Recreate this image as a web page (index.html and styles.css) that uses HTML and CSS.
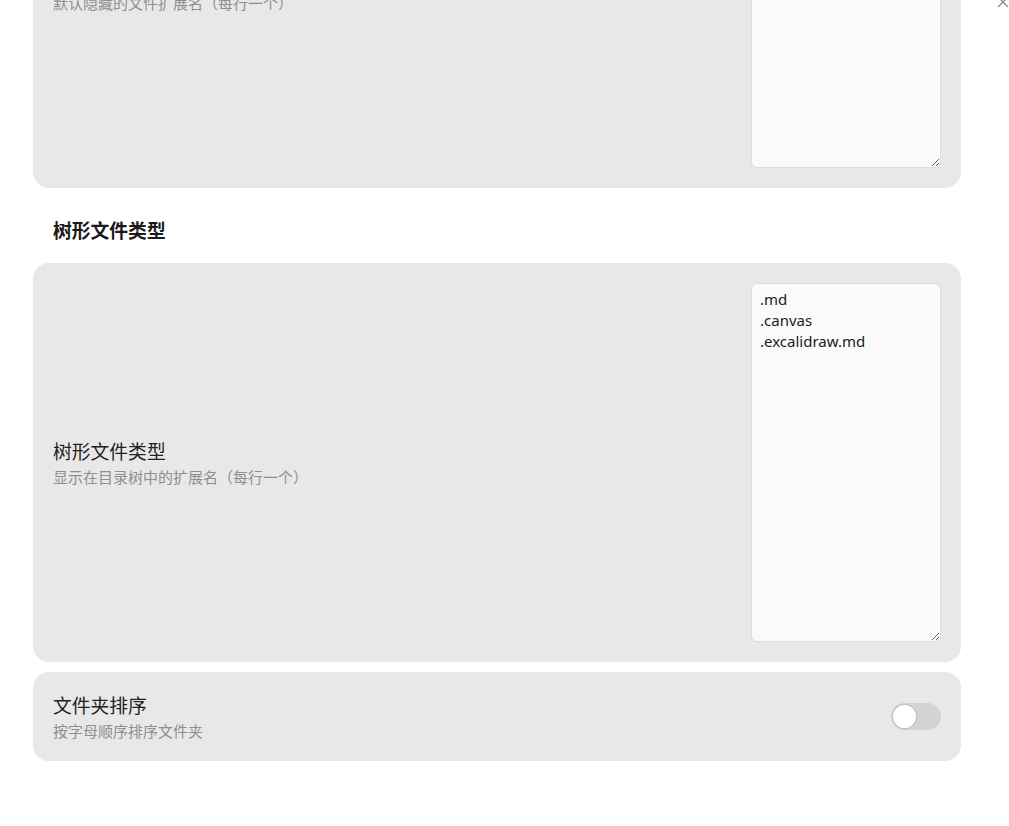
FILE: index.html
```html
<!DOCTYPE html>
<html lang="zh-CN">
<head>
<meta charset="utf-8">
<title>设置</title>
<link rel="stylesheet" href="styles.css">
</head>
<body>
<div class="modal">
  <button class="close" aria-label="关闭">
    <svg viewBox="0 0 16 16" width="16" height="16"><path d="M3 3 L13 13 M13 3 L3 13" stroke="#8a8a8a" stroke-width="1.3" fill="none"/></svg>
  </button>
  <div class="content">
    <div class="card card-tall card-first">
      <div class="info">
        <div class="title">隐藏的文件类型</div>
        <div class="desc">默认隐藏的文件扩展名（每行一个）</div>
      </div>
      <textarea class="ta"></textarea>
    </div>

    <h3 class="heading">树形文件类型</h3>

    <div class="card card-tall">
      <div class="info">
        <div class="title">树形文件类型</div>
        <div class="desc">显示在目录树中的扩展名（每行一个）</div>
      </div>
      <textarea class="ta">.md
.canvas
.excalidraw.md</textarea>
    </div>

    <div class="card card-row">
      <div class="info">
        <div class="title">文件夹排序</div>
        <div class="desc">按字母顺序排序文件夹</div>
      </div>
      <div class="toggle"><div class="knob"></div></div>
    </div>
  </div>
</div>
</body>
</html>
```

FILE: styles.css
```css
html, body {
  margin: 0;
  padding: 0;
  background: #ffffff;
  overflow: hidden;
  height: 826px;
}
body {
  font-family: "Noto Sans", "Noto Sans CJK SC", sans-serif;
  color: #222;
}
.modal {
  position: relative;
  width: 1009px;
  height: 826px;
}
.close {
  position: absolute;
  top: -8px;
  right: -4px;
  width: 20px;
  height: 20px;
  padding: 0;
  border: 0;
  background: transparent;
  display: flex;
  align-items: center;
  justify-content: center;
}
.content {
  width: 928px;
  margin-left: 33px;
  display: flex;
  flex-direction: column;
}
.card {
  background: #e8e8e8;
  border-radius: 16px;
  padding: 20px;
  display: flex;
  align-items: center;
  justify-content: space-between;
  box-sizing: border-box;
}
.card-first {
  margin-top: -211px;
}
.card-tall {
  height: 399px;
}
.card-row {
  height: 89px;
  margin-top: 10px;
}
.info {
  display: flex;
  flex-direction: column;
}
.title {
  font-family: "Noto Sans CJK SC", sans-serif;
  font-size: 18.8px;
  line-height: 26px;
  color: #222;
}
.desc {
  font-family: "Noto Sans CJK SC", sans-serif;
  font-size: 15px;
  line-height: 22px;
  color: #8e8e8e;
  margin-top: 2px;
}
.heading {
  margin: 29px 0 20px 20px;
  font-family: "Noto Sans CJK SC", sans-serif;
  font-size: 18.8px;
  line-height: 26px;
  font-weight: 700;
  color: #1a1a1a;
}
.ta {
  width: 190px;
  height: 359px;
  box-sizing: border-box;
  border: 1px solid #dcdcdc;
  border-radius: 6px;
  background: #fafafa;
  padding: 5px 8px;
  font-family: "Noto Sans", "Open Sans", sans-serif;
  font-size: 15px;
  line-height: 21px;
  color: #1a1a1a;
  resize: vertical;
  outline: none;
  flex-shrink: 0;
}
.toggle {
  width: 50px;
  height: 27px;
  border-radius: 14px;
  background: #d3d3d3;
  display: flex;
  align-items: center;
  padding: 0 2px;
  box-sizing: border-box;
}
.knob {
  width: 23px;
  height: 23px;
  border-radius: 50%;
  background: #ffffff;
  box-shadow: 0 0 0 1px #bdbdbd;
}
```
